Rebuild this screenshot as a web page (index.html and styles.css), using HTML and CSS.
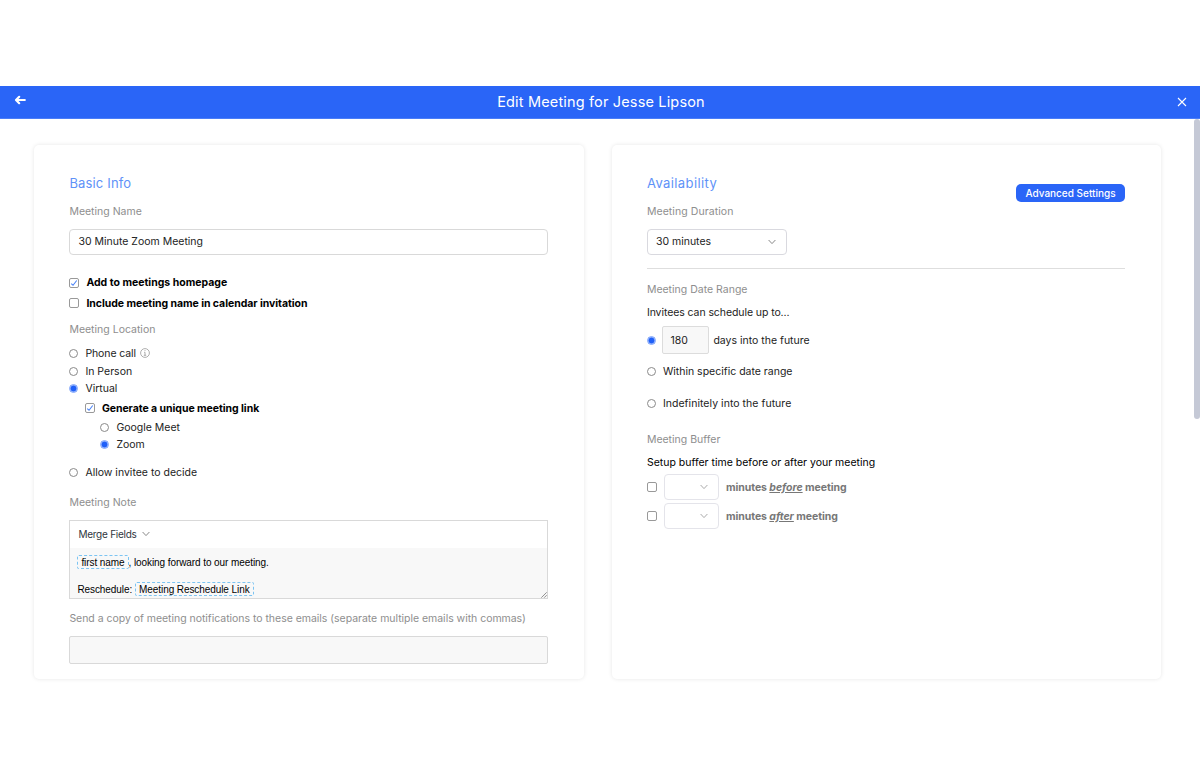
FILE: index.html
```
<!DOCTYPE html>
<html lang="en">
<head>
    <meta charset="UTF-8">
    <meta name="viewport" content="width=device-width, initial-scale=1.0">
    <title>Edit Meeting</title>
    <link rel="stylesheet" href="styles.css">
</head>
<body>

    <!-- header -->
    <header class="topbar">
        <svg class="back" viewBox="0 0 12 10"><path d="M5.2 1.8 2 5l3.2 3.2M2.2 5h8.6" /></svg>
        <h1>Edit Meeting for Jesse Lipson</h1>
        <svg class="close" viewBox="0 0 10 10"><path d="M1 1l8 8M9 1L1 9" /></svg>
    </header>

    <div class="page">
        <div class="scrollbar"></div>

        <!-- basic info -->
        <section class="card">
            <h2>Basic Info</h2>
            <div class="label name-label">Meeting Name</div>
            <div class="input name-input"><span>30 Minute Zoom Meeting</span></div>

            <div class="row add-row"><i class="check on"><svg viewBox="0 0 10 10"><path d="M1.5 5.8 3.8 7.8 8.4 1.9" /></svg></i><b>Add to meetings homepage</b></div>
            <div class="row include-row"><i class="check"></i><b class="tight">Include meeting name in calendar invitation</b></div>

            <div class="label location-label">Meeting Location</div>
            <div class="row phone-row"><i class="radio"></i><span class="phone-text">Phone call</span>
                <svg class="info" viewBox="0 0 10 10"><circle cx="5" cy="5" r="4.4" /><path d="M5 2.2v.9M4.2 4.3H5v3M3.8 7.3h2.4" /></svg>
            </div>
            <div class="row person-row"><i class="radio"></i><span>In Person</span></div>
            <div class="row virtual-row"><i class="radio on"></i><span>Virtual</span></div>
            <div class="row link-row"><i class="check on"><svg viewBox="0 0 10 10"><path d="M1.5 5.8 3.8 7.8 8.4 1.9" /></svg></i><b class="tight">Generate a unique meeting link</b></div>
            <div class="row meet-row"><i class="radio"></i><span>Google Meet</span></div>
            <div class="row zoom-row"><i class="radio on"></i><span>Zoom</span></div>
            <div class="row allow-row"><i class="radio"></i><span>Allow invitee to decide</span></div>

            <div class="label note-label">Meeting Note</div>
            <div class="editor">
                <div class="toolbar"><span>Merge Fields</span><svg class="chevron" viewBox="0 0 8 6"><path d="M.6 1 4 4.6 7.4 1" /></svg></div>
                <div class="note">
                    <p><span class="tag">first name</span><span>, looking forward to our meeting.</span></p>
                    <p><span>Reschedule:</span><span class="tag link-tag">Meeting Reschedule Link</span></p>
                    <svg class="grip" viewBox="0 0 6 6"><path d="M.3 5.7 5.7.3M3.2 5.7 5.7 3.2" /></svg>
                </div>
            </div>

            <div class="label copy-label">Send a copy of meeting notifications to these emails (separate multiple emails with commas)</div>
            <div class="input emails"></div>
        </section>

        <!-- availability -->
        <section class="card">
            <div class="card-head">
                <h2 class="avail">Availability</h2>
                <div class="button">Advanced Settings</div>
            </div>
            <div class="label duration-label">Meeting Duration</div>
            <div class="select"><span>30 minutes</span><svg class="chevron" viewBox="0 0 8 6"><path d="M.6 1 4 4.6 7.4 1" /></svg></div>
            <div class="line"></div>

            <div class="label range-label">Meeting Date Range</div>
            <div class="text invite-text">Invitees can schedule up to...</div>
            <div class="row days-row"><i class="radio on"></i><div class="days">180</div><span>days into the future</span></div>
            <div class="row within-row"><i class="radio"></i><span>Within specific date range</span></div>
            <div class="row indef-row"><i class="radio"></i><span class="indef-text">Indefinitely into the future</span></div>

            <div class="label buffer-label">Meeting Buffer</div>
            <div class="text setup-text">Setup buffer time before or after your meeting</div>
            <div class="buffer-row">
                <i class="check"></i>
                <div class="select small"><svg class="chevron" viewBox="0 0 8 6"><path d="M.6 1 4 4.6 7.4 1" /></svg></div>
                <b>minutes <em>before</em> meeting</b>
            </div>
            <div class="buffer-row">
                <i class="check"></i>
                <div class="select small"><svg class="chevron" viewBox="0 0 8 6"><path d="M.6 1 4 4.6 7.4 1" /></svg></div>
                <b>minutes <em>after</em> meeting</b>
            </div>
        </section>
    </div>

</body>
</html>
```
FILE: styles.css
```
* {
    box-sizing: border-box;
}

body {
    margin: 0;
    padding-top: 86px;
    height: 780px;
    overflow: hidden;
    background: #fff;
    color: #222;
    font-family: Inter, "Liberation Sans", sans-serif;
    font-size: 10.5px;
}

svg {
    display: block;
    fill: none;
    stroke: currentColor;
}

/* header */
.topbar {
    display: flex;
    align-items: center;
    justify-content: space-between;
    height: 33px;
    padding: 0 13.5px 0 13.5px;
    background: #2a65f7;
    border-bottom: 1px solid #4a7df8;
    color: #fff;
}

.topbar h1 {
    margin: 0 0 2px;
    font-size: 14.5px;
    font-weight: 400;
    letter-spacing: .16px;
}

.back {
    width: 12px;
    height: 10px;
    margin-bottom: 4px;
    stroke-width: 2.2;
    stroke-linejoin: round;
    stroke-linecap: round;
}

.close {
    width: 10px;
    height: 10px;
    stroke-width: 1.1;
}

/* page */
.page {
    position: relative;
    display: flex;
    gap: 28.4px;
    padding: 26px 39px 0 34.4px;
}

.scrollbar {
    position: absolute;
    top: 0;
    right: 0;
    width: 6px;
    height: 300px;
    border-radius: 3px;
    background: #c5c9d6;
}

.card {
    flex: 1;
    height: 534px;
    padding: 29px 36px 0 35px;
    border-radius: 5px;
    box-shadow: 0 0 4px rgba(0, 0, 0, .1);
}

.card h2 {
    margin: 0;
    height: 20px;
    line-height: 19px;
    font-size: 13px;
    font-weight: 400;
    letter-spacing: .16px;
    color: #6092f8;
}

.card .avail {
    letter-spacing: .4px;
}

.label {
    height: 16px;
    line-height: 16px;
    color: #8e8e8e;
    white-space: nowrap;
}

.name-label,
.duration-label {
    margin-top: 10px;
}

.duration-label {
    letter-spacing: .07px;
}

.input {
    display: flex;
    align-items: center;
    border: 1px solid #d9d9d9;
    border-radius: 4px;
}

.name-input {
    height: 26px;
    margin-top: 9px;
    padding: 0 8px 1px;
}

/* options */
.row {
    display: flex;
    align-items: center;
    height: 16px;
    white-space: nowrap;
}

.row b {
    color: #000;
}

.row .tight {
    letter-spacing: -.05px;
}

.check {
    flex: none;
    width: 10px;
    height: 10px;
    margin-right: 7px;
    border: 1px solid #999;
    border-radius: 2px;
}

.check svg {
    width: 8px;
    height: 8px;
    color: #4781f7;
    stroke-width: 1.3;
}

.radio {
    flex: none;
    width: 9px;
    height: 9px;
    margin-right: 7px;
    border: 1px solid #8a8a8a;
    border-radius: 50%;
}

/* solid dot inside a paler ring */
.radio.on {
    border-color: #7da3fb;
    background: radial-gradient(#2060f8 2.6px, #b5cbfd 3.4px);
}

.add-row { margin-top: 19.5px; }
.include-row { margin-top: 4.5px; }
.location-label { margin-top: 11px; }
.phone-row { margin-top: 7px; }
.person-row { margin-top: 2px; }
.virtual-row { margin-top: 1px; }
.link-row { margin-top: 4px; padding-left: 15.5px; }
.meet-row { margin-top: 3px; padding-left: 31px; }
.zoom-row { margin-top: 1px; padding-left: 31px; }
.allow-row { margin-top: 12px; }
.note-label { margin-top: 15px; }

.phone-text {
    letter-spacing: -.1px;
}

.info {
    width: 10px;
    height: 10px;
    margin-left: 4px;
    color: #999;
    stroke-width: .8;
}

.chevron {
    width: 8px;
    height: 6px;
    color: #888;
}

/* note editor */
.editor {
    height: 79px;
    margin-top: 9px;
    border: 1px solid #d9d9d9;
}

.toolbar {
    display: flex;
    align-items: center;
    gap: 5px;
    height: 27px;
    padding: 0 0 1px 8px;
    color: #2f3640;
    font-size: 10px;
    letter-spacing: -.25px;
}

.note {
    position: relative;
    height: 50px;
    padding: 7px 7px 0;
    background: #f8f8f8;
    color: #000;
    font-family: "Liberation Sans", Arial, sans-serif;
    font-size: 10px;
    letter-spacing: -.08px;
}

.note p {
    display: flex;
    align-items: center;
    height: 14px;
    margin: 0 0 13px;
}

.tag {
    height: 14px;
    padding: 0 3px;
    border: 1px dashed #7cc4f2;
    border-radius: 2px;
    line-height: 13px;
}

.link-tag {
    margin-left: 3px;
}

.grip {
    position: absolute;
    right: 0;
    bottom: 0;
    width: 6px;
    height: 6px;
    color: #777;
    stroke-width: .8;
}

.copy-label {
    margin-top: 12px;
    letter-spacing: -.03px;
}

.emails {
    height: 28px;
    margin-top: 9px;
    border-radius: 2px;
    background: #f8f8f8;
}

/* availability */
.card-head {
    display: flex;
    justify-content: space-between;
    height: 20px;
}

.button {
    height: 18px;
    width: 109px;
    margin-top: 10px;
    border-radius: 5px;
    background: #2a65f7;
    color: #fff;
    font-size: 10px;
    font-weight: 500;
    line-height: 18px;
    text-align: center;
}

.select {
    display: flex;
    align-items: center;
    justify-content: space-between;
    width: 140.5px;
    height: 26px;
    margin-top: 9px;
    padding: 0 10px 1px 8px;
    border: 1px solid #d9d9df;
    border-radius: 4px;
}

.line {
    height: 1px;
    margin-top: 13px;
    background: #dedede;
}

.range-label { margin-top: 13px; }

.text {
    height: 16px;
    line-height: 16px;
    white-space: nowrap;
}

.invite-text { margin-top: 7px; letter-spacing: -.08px; }
.days-row { height: 28px; margin-top: 5px; }
.within-row { margin-top: 9.5px; }
.indef-row { margin-top: 15.5px; }

.indef-text {
    letter-spacing: .04px;
}

.days {
    width: 47px;
    height: 28px;
    margin: 0 4px 0 -.5px;
    padding-left: 7px;
    border: 1px solid #dcdcdc;
    border-radius: 2px;
    background: #f8f8f8;
    line-height: 27px;
}

.buffer-label { margin-top: 21px; }
.setup-text { margin-top: 7px; color: #000; }

.buffer-row {
    display: flex;
    align-items: center;
    height: 26px;
    margin-top: 3px;
    color: #777;
    white-space: nowrap;
}

.buffer-row b {
    letter-spacing: -.05px;
}

.buffer-row em {
    text-decoration: underline;
}

.select.small {
    width: 55px;
    margin: 0 7px 0 0;
    justify-content: flex-end;
    border-color: #e4e4ea;
}

.select.small .chevron {
    color: #aaa;
}
```
